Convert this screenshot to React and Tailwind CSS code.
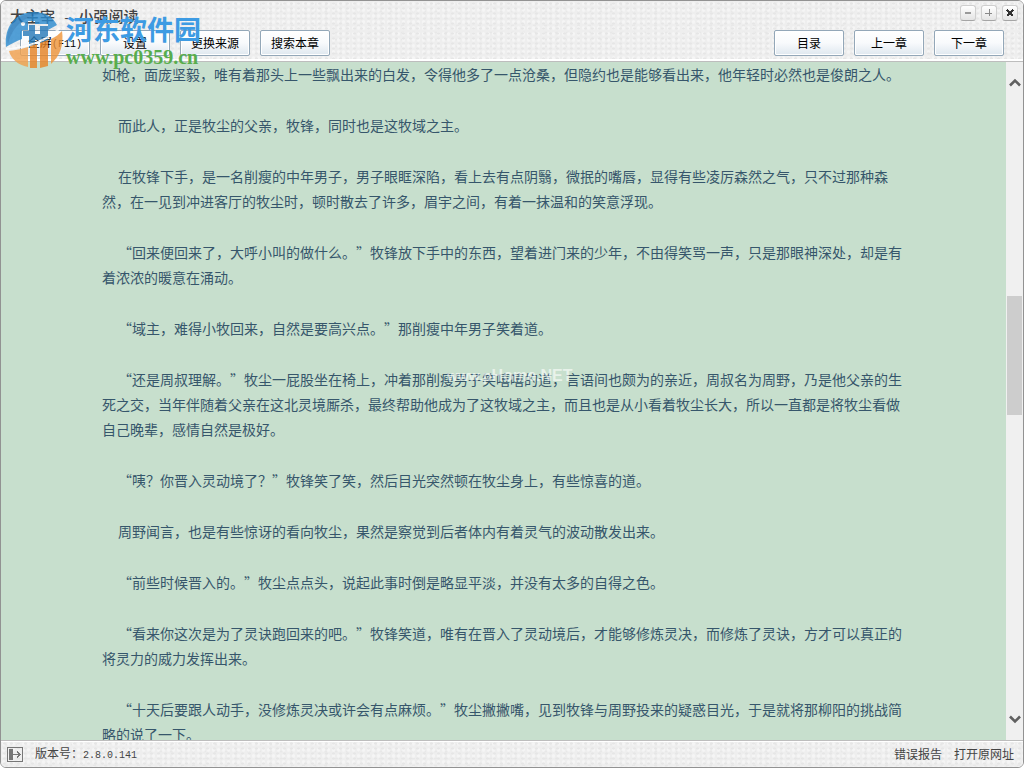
import clsx from "clsx";

const paragraphs = [
  { text: "如枪，面庞坚毅，唯有着那头上一些飘出来的白发，令得他多了一点沧桑，但隐约也是能够看出来，他年轻时必然也是俊朗之人。", continued: true },
  { text: "而此人，正是牧尘的父亲，牧锋，同时也是这牧域之主。" },
  { text: "在牧锋下手，是一名削瘦的中年男子，男子眼眶深陷，看上去有点阴翳，微抿的嘴唇，显得有些凌厉森然之气，只不过那种森然，在一见到冲进客厅的牧尘时，顿时散去了许多，眉宇之间，有着一抹温和的笑意浮现。" },
  { text: "“回来便回来了，大呼小叫的做什么。”牧锋放下手中的东西，望着进门来的少年，不由得笑骂一声，只是那眼神深处，却是有着浓浓的暖意在涌动。" },
  { text: "“域主，难得小牧回来，自然是要高兴点。”那削瘦中年男子笑着道。" },
  { text: "“还是周叔理解。”牧尘一屁股坐在椅上，冲着那削瘦男子笑嘻嘻的道，言语间也颇为的亲近，周叔名为周野，乃是他父亲的生死之交，当年伴随着父亲在这北灵境厮杀，最终帮助他成为了这牧域之主，而且也是从小看着牧尘长大，所以一直都是将牧尘看做自己晚辈，感情自然是极好。" },
  { text: "“咦？你晋入灵动境了？”牧锋笑了笑，然后目光突然顿在牧尘身上，有些惊喜的道。" },
  { text: "周野闻言，也是有些惊讶的看向牧尘，果然是察觉到后者体内有着灵气的波动散发出来。" },
  { text: "“前些时候晋入的。”牧尘点点头，说起此事时倒是略显平淡，并没有太多的自得之色。" },
  { text: "“看来你这次是为了灵诀跑回来的吧。”牧锋笑道，唯有在晋入了灵动境后，才能够修炼灵决，而修炼了灵诀，方才可以真正的将灵力的威力发挥出来。" },
  { text: "“十天后要跟人动手，没修炼灵决或许会有点麻烦。”牧尘撇撇嘴，见到牧锋与周野投来的疑惑目光，于是就将那柳阳的挑战简略的说了一下。" },
];

const texture =
  "bg-[#eeeeee] bg-[radial-gradient(#e6e6e6_1px,transparent_2px),radial-gradient(#f5f5f5_1px,transparent_2px),radial-gradient(#e8e8e8_1px,transparent_2px)] bg-[size:7px_5px,5px_6px,11px_7px]";

function ToolButton({ children }) {
  return (
    <button className="h-[26px] w-[70px] rounded-[2px] border border-[#93a7b8] bg-linear-to-b from-white via-[#f8fafc] to-[#dfe8ef] text-xs text-black shadow-[inset_0_0_0_1px_#ffffff]">
      {children}
    </button>
  );
}

function WindowButton({ label, children }) {
  return (
    <button
      aria-label={label}
      className="flex size-4 items-center justify-center rounded-[3px] border border-[#cfcfcf] border-b-[#a5a5a5] bg-linear-to-b from-white to-[#e4e4e4]"
    >
      <svg viewBox="0 0 8 8" className="size-2" fill="none" shapeRendering="crispEdges">
        {children}
      </svg>
    </button>
  );
}

function SiteMark() {
  return (
    <div className="pointer-events-none absolute top-2 left-1 flex gap-px">
      <svg viewBox="0 0 60 60" className="size-[60px] opacity-80">
        {/* upper half */}
        <path d="M1 38C-1 17 11 3 29 3c11 0 19 5 23 13l-9 5V15H30v-3h-7v9h-6v9C11 32 6 35 1 38Z" fill="#2b8bd0" />
        <path d="M3 35C8 15 22 6 38 5 27 2 14 6 7 15 3 21 1 28 3 35Z" fill="#1f78bd" />
        <path d="M24 16h6v9h5v-8h8v15l-8 3v-4h-5v6l-6 2V27h-6v-5h6Z" fill="#2478b8" />
        {/* lower half */}
        <path d="M4 42c7-1 13-2 19-4v20C13 56 6 50 4 42Z" fill="#f2a04b" />
        <path d="M25 37l7-2v24h-7ZM35 34l8-3v26l-8 2Z" fill="#e98323" />
        <path d="M46 30c5-2 8-5 11-8 2 14-2 25-11 33Z" fill="#f09437" />
        <path d="M1 40C19 39 41 33 55 19" fill="none" stroke="white" strokeWidth="2" />
        <circle cx="18" cy="15" r="2" fill="white" />
      </svg>
      <div className="whitespace-nowrap">
        <div className="mt-1 font-['Noto_Sans_CJK_SC',sans-serif] text-[27px] leading-8 font-bold text-[#3d9be3]">
          河东软件园
        </div>
        <div className="font-['Liberation_Serif',serif] text-xl leading-6 font-bold text-[#58ad4d]">
          www.pc0359.cn
        </div>
      </div>
    </div>
  );
}

export default function App() {
  return (
    <div className="relative flex h-screen flex-col overflow-hidden rounded-md border border-[#929292] font-['Noto_Sans_CJK_SC',sans-serif]">
      <header className={clsx(texture, "h-[61px] shrink-0 border-b border-[#bdbdbd] shadow-[inset_0_-2px_0_#ffffff]")}>
        <div className="flex h-7 items-start justify-between pt-1 pr-[5px] pl-[9px]">
          <h1 className="text-[15px] leading-[22px] font-medium text-[#444444]">
            大主宰<span className="font-['Liberation_Mono',monospace] text-[13px]"> - </span>小强阅读
          </h1>
          <div className="flex gap-[5px]">
            <WindowButton label="最小化">
              <path d="M1 4h6" stroke="#9a9a9a" strokeWidth="2" />
            </WindowButton>
            <WindowButton label="最大化">
              <path d="M0 4h7M4 0v7" stroke="#888888" />
            </WindowButton>
            <WindowButton label="关闭">
              <path d="M1 1l6 6M7 1L1 7" stroke="#333333" strokeWidth="2" />
            </WindowButton>
          </div>
        </div>
        <div className="flex justify-between pt-px pr-[19px] pl-[19px]">
          <div className="flex gap-[10px]">
            <ToolButton>
              全屏<span className="font-['Liberation_Mono',monospace] text-[10px]">(F11)</span>
            </ToolButton>
            <ToolButton>设置</ToolButton>
            <ToolButton>更换来源</ToolButton>
            <ToolButton>搜索本章</ToolButton>
          </div>
          <div className="flex gap-[10px]">
            <ToolButton>目录</ToolButton>
            <ToolButton>上一章</ToolButton>
            <ToolButton>下一章</ToolButton>
          </div>
        </div>
      </header>

      <div className="flex min-h-0 flex-1">
        <main className="relative min-w-0 flex-1 overflow-hidden bg-[#c7dfcd] pr-[100px] pl-[101px]">
          <article className="flex flex-col gap-[26px] text-sm leading-[25px] text-[#36566b] [text-spacing-trim:space-all]">
            {paragraphs.map((p) => (
              <p key={p.text} className={p.continued ? undefined : "indent-4"}>
                {p.text}
              </p>
            ))}
          </article>
          <div className="pointer-events-none absolute top-[302px] left-[446px] font-['Liberation_Sans',sans-serif] text-base leading-6 font-bold whitespace-nowrap text-white/60">
            <span className="text-sm">www.p</span>Home.NET
          </div>
        </main>
        <div className="flex w-[17px] shrink-0 flex-col items-center bg-[#f0f0f0] pt-4 pb-4">
          <svg viewBox="0 0 12 9" className="h-[9px] w-3" fill="none">
            <path d="M1 7.5L6 2.5L11 7.5" stroke="#606060" strokeWidth="2.6" />
          </svg>
          <div className="flex w-full flex-1 flex-col px-px">
            <div className="grow-[208]" />
            <div className="grow-[119] bg-[#cdcdcd]" />
            <div className="grow-[299]" />
          </div>
          <svg viewBox="0 0 12 9" className="h-[9px] w-3" fill="none">
            <path d="M1 1.5L6 6.5L11 1.5" stroke="#606060" strokeWidth="2.6" />
          </svg>
        </div>
      </div>

      <footer className={clsx(texture, "flex h-[27px] shrink-0 items-center justify-between border-t border-[#bdbdbd] pr-[9px] pl-[6px] text-xs text-[#444444] shadow-[inset_0_1px_0_#ffffff]")}>
        <div className="flex items-center gap-3">
          <button aria-label="侧栏">
            <svg viewBox="0 0 16 16" className="size-4" fill="none" shapeRendering="crispEdges">
              <path d="M.5 1.5h15v14H.5z" stroke="#777777" />
              <path d="M2 3h4v11H2z" fill="#777777" />
              <path d="M6 8.5h7M10 5.5l3 3l-3 3" stroke="#777777" />
            </svg>
          </button>
          <span>
            版本号：<span className="font-['Liberation_Mono',monospace] text-[10px]">2.8.0.141</span>
          </span>
        </div>
        <div className="flex gap-3">
          <a href="#report">错误报告</a>
          <a href="#source">打开原网址</a>
        </div>
      </footer>

      <SiteMark />
    </div>
  );
}
